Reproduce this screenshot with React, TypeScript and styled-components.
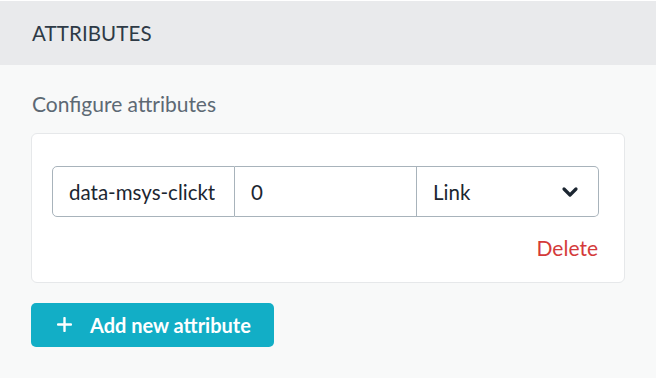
import styled, { createGlobalStyle } from "styled-components";

const GlobalStyle = createGlobalStyle`
  html, body {
    margin: 0;
    padding: 0;
    background: #f8f9f9;
    font-family: "Lato", "Noto Sans", sans-serif;
  }
  * { box-sizing: border-box; }
`;

const Panel = styled.div`
  width: 656px;
  height: 378px;
  padding-top: 1px;
  background: #fff;
  display: flex;
  flex-direction: column;
`;

const Header = styled.div`
  height: 64px;
  background: #e9eaec;
  padding: 0 32px;
  display: flex;
  align-items: center;
  font-size: 20.5px;
  color: #2e3a46;
  letter-spacing: 0.1px;
`;

const Body = styled.div`
  flex: 1;
  background: #f8f9f9;
  padding: 26px 31px 0;
`;

const Label = styled.div`
  font-size: 21px;
  color: #5d6974;
  margin-left: 1px;
  line-height: 26px;
`;

const Card = styled.div`
  margin-top: 16px;
  width: 594px;
  height: 150px;
  background: #fff;
  border: 1px solid #e6e8ea;
  border-radius: 6px;
  padding: 32px 25px 0 20px;
  display: flex;
  flex-direction: column;
`;

const Group = styled.div`
  display: flex;
  height: 51px;
`;

const Field = styled.div<{ $pos: "first" | "mid" | "last" }>`
  width: ${(p) => (p.$pos === "first" ? "183px" : "182px")};
  flex: none;
  border: 1px solid #a8b3bb;
  border-left-width: ${(p) => (p.$pos === "first" ? "1px" : "0")};
  border-radius: ${(p) =>
    p.$pos === "first" ? "5px 0 0 5px" : p.$pos === "last" ? "0 5px 5px 0" : "0"};
  display: flex;
  align-items: center;
  justify-content: space-between;
  padding: 0 19px 0 16px;
  font-size: 20.5px;
  color: #1c2631;
  overflow: hidden;
  white-space: nowrap;
`;

const Clip = styled.span`
  overflow: hidden;
  width: 149px;
  display: block;
`;

const Actions = styled.div`
  display: flex;
  justify-content: flex-end;
  padding-top: 18px;
  padding-right: 1px;
`;

const DeleteLink = styled.span`
  color: #d43a3a;
  font-size: 21px;
`;

const AddButton = styled.button`
  margin-top: 20px;
  width: 243px;
  height: 44px;
  background: #12aec6;
  border: none;
  border-radius: 5px;
  color: #fff;
  font-family: inherit;
  font-size: 20px;
  font-weight: 700;
  display: flex;
  align-items: center;
  gap: 18px;
  padding: 0 0 1px 26px;
`;

export default function App() {
  return (
    <>
      <GlobalStyle />
      <Panel>
        <Header>ATTRIBUTES</Header>
        <Body>
          <Label>Configure attributes</Label>
          <Card>
            <Group>
              <Field $pos="first">
                <Clip>data-msys-clicktrack</Clip>
              </Field>
              <Field $pos="mid">0</Field>
              <Field $pos="last">
                Link
                <svg width="18" height="12" viewBox="0 0 18 12">
                  <path d="M3 3 L9 9 L15 3" fill="none" stroke="#1c2631" strokeWidth="3.2" strokeLinecap="round" strokeLinejoin="round" />
                </svg>
              </Field>
            </Group>
            <Actions>
              <DeleteLink>Delete</DeleteLink>
            </Actions>
          </Card>
          <AddButton>
            <svg width="15" height="15" viewBox="0 0 15 15">
              <path d="M7.5 1 V14 M1 7.5 H14" stroke="#fff" strokeWidth="2.4" strokeLinecap="round" />
            </svg>
            Add new attribute
          </AddButton>
        </Body>
      </Panel>
    </>
  );
}
